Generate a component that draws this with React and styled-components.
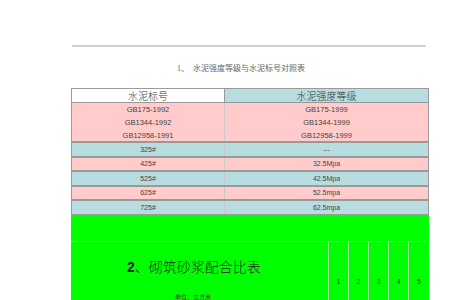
import React from "react";
import styled, { createGlobalStyle } from "styled-components";

const GlobalStyle = createGlobalStyle`
  html, body {
    margin: 0;
    padding: 0;
    background: #fff;
    width: 450px;
    height: 300px;
    overflow: hidden;
  }
`;

const rows = [
  ["325#", "---", "teal"],
  ["425#", "32.5Mpa", "pink"],
  ["525#", "42.5Mpa", "teal"],
  ["625#", "52.5mpa", "pink"],
  ["725#", "62.5mpa", "teal"],
];

const standards = [
  ["GB175-1992", "GB175-1999"],
  ["GB1344-1992", "GB1344-1999"],
  ["GB12958-1991", "GB12958-1999"],
];

const bg = { teal: "#b8dde0", pink: "#ffcccb", white: "#ffffff" };

export default function App() {
  return (
    <>
      <GlobalStyle />
      <Page>
        <Rule />
        <Caption>1、&nbsp;&nbsp;水泥强度等级与水泥标号对照表</Caption>
        <Table>
          <Row>
            <HeadCell tone="white">水泥标号</HeadCell>
            <HeadCell tone="teal">水泥强度等级</HeadCell>
          </Row>
          <Row>
            <StdCell tone="pink">
              {standards.map((s) => (
                <div key={s[0]}>{s[0]}</div>
              ))}
            </StdCell>
            <StdCell tone="pink">
              {standards.map((s) => (
                <div key={s[1]}>{s[1]}</div>
              ))}
            </StdCell>
          </Row>
          {rows.map(([a, b, t]) => (
            <Row key={a}>
              <Cell tone={t}>{a}</Cell>
              <Cell tone={t}>{b}</Cell>
            </Row>
          ))}
        </Table>
        <GreenBlock>
          <GreenBand />
          <GreenGrid>
            <TitleCell>
              <BigTitle>
                <b>2</b>、砌筑砂浆配合比表
              </BigTitle>
              <Unit>单位：立方米</Unit>
            </TitleCell>
            {[1, 2, 3, 4, 5].map((n) => (
              <NumCell key={n}>{n}</NumCell>
            ))}
          </GreenGrid>
        </GreenBlock>
      </Page>
    </>
  );
}

const Page = styled.div`
  padding: 45px 0 0 71px;
  width: 358px;
`;

const Rule = styled.div`
  width: 354px;
  margin-left: 1px;
  border-top: 2px solid #d0d0d0;
`;

const Caption = styled.div`
  margin-top: 15px;
  padding-right: 18px;
  height: 14px;
  text-align: center;
  font-family: "Liberation Serif", "Noto Sans CJK SC", serif;
  font-size: 8px;
  line-height: 14px;
  color: #666;
`;

const Table = styled.div`
  margin-top: 12px;
  border: 1px solid #9a9a9a;
  border-bottom: none;
  display: flex;
  flex-direction: column;
`;

const Row = styled.div`
  display: grid;
  grid-template-columns: 152px 1fr;
  border-bottom: 2px solid #999;
  &:first-child {
    border-bottom-width: 1px;
  }
`;

const Cell = styled.div`
  background: ${(p) => bg[p.tone]};
  height: 12.5px;
  display: flex;
  align-items: center;
  justify-content: center;
  font-family: "Liberation Sans", Arial, sans-serif;
  font-size: 7px;
  color: #444;
  & + & {
    border-left: 1px solid #c9c9c9;
  }
`;

const HeadCell = styled(Cell)`
  height: 13px;
  font-family: "Liberation Serif", "Noto Sans CJK SC", serif;
  font-size: 10px;
  font-weight: 300;
  color: #333;
  & + & {
    border-left: 1px solid #999;
  }
`;

const StdCell = styled(Cell)`
  height: 38px;
  flex-direction: column;
  line-height: 13px;
  font-size: 7.5px;
`;

const GreenBlock = styled.div`
  background: #00ff00;
  height: 100px;
`;

const GreenBand = styled.div`
  height: 25px;
  border-bottom: 1px solid #6fe86f;
`;

const GreenGrid = styled.div`
  display: grid;
  grid-template-columns: 257px 20px 20px 20px 20px 21px;
  height: 74px;
`;

const TitleCell = styled.div`
  padding: 15px 0 0 56px;
`;

const BigTitle = styled.div`
  font-family: "Noto Sans CJK SC", sans-serif;
  font-size: 14px;
  font-weight: 300;
  line-height: 18px;
  color: #222;
  b {
    font-family: "Liberation Sans", Arial, sans-serif;
    font-weight: 700;
  }
`;

const Unit = styled.div`
  margin: 17px 0 0 48px;
  font-family: "Noto Sans CJK SC", sans-serif;
  font-size: 6px;
  line-height: 8px;
  color: #444;
`;

const NumCell = styled.div`
  border-left: 1px solid #9fe49f;
  display: flex;
  align-items: flex-start;
  justify-content: center;
  padding-top: 36px;
  font-family: "Liberation Sans", Arial, sans-serif;
  font-size: 7px;
  color: #333;
`;
